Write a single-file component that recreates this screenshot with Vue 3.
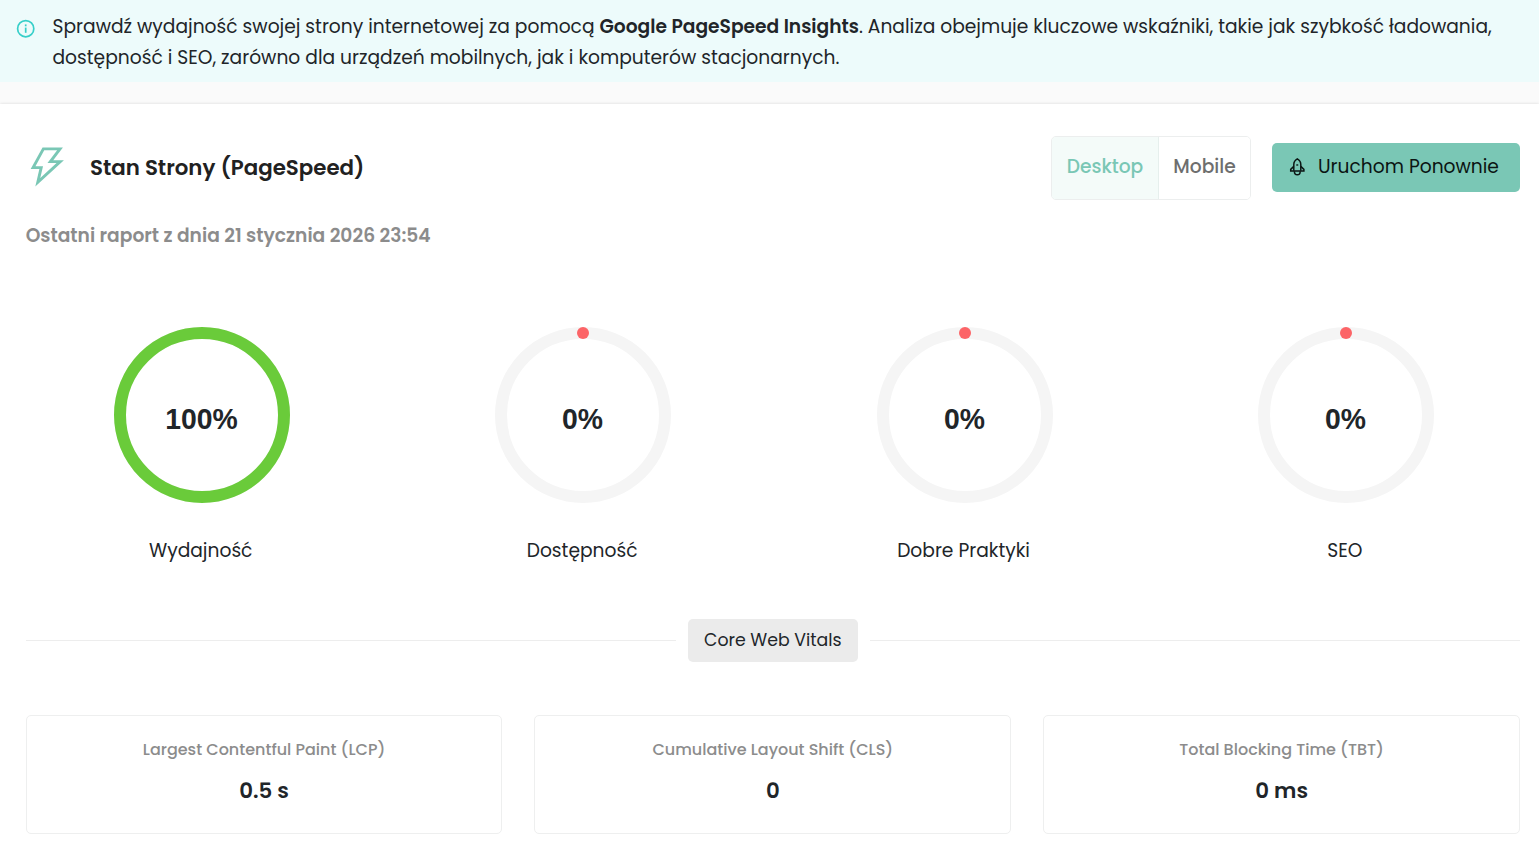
<template>
  <div class="page">
    <div class="alert">
      <svg class="info-icon" viewBox="0 0 20 20" fill="none" stroke="#36cfc9" stroke-width="1.7">
        <circle cx="9.7" cy="9.7" r="8.1" />
        <path d="M9.7 8.6v5.2" />
        <path d="M9.7 5.4v1.9" />
      </svg>
      <p class="alert-text">Sprawdź wydajność swojej strony internetowej za pomocą <strong>Google PageSpeed Insights</strong>. Analiza obejmuje kluczowe wskaźniki, takie jak szybkość ładowania, dostępność i SEO, zarówno dla urządzeń mobilnych, jak i komputerów stacjonarnych.</p>
    </div>

    <main class="report">
      <header class="report-header">
        <svg class="bolt" viewBox="0 0 34 40" fill="none" stroke="#7ac7b5" stroke-width="2.9">
          <path d="M13.4 1.9H30L20.4 14.6H30.2L7.8 35.2L11.2 20.6H3.1Z" />
        </svg>
        <h2>Stan Strony (PageSpeed)</h2>
        <div class="device-switch">
          <button :class="{ active: device === 'desktop' }" @click="device = 'desktop'">Desktop</button>
          <button :class="{ active: device === 'mobile' }" @click="device = 'mobile'">Mobile</button>
        </div>
        <button class="btn-run">
          <svg class="rocket" viewBox="0 0 18 20" fill="none" stroke="#0b1513" stroke-width="1.5">
            <path d="M5.8 14.8V8.4C5.8 5.8 7.5 3.8 9.3 2.8C11.1 3.8 12.8 5.8 12.8 8.4V14.8" />
            <path d="M5.8 10.4L2.7 13.4V14.9H15.9V13.4L12.8 10.4" />
            <path d="M6.4 15.2C6.4 17.4 7.6 18.8 9.3 18.8S12.2 17.4 12.2 15.2" />
            <circle cx="9.3" cy="9" r=".3" />
          </svg>
          <span>Uruchom Ponownie</span>
        </button>
      </header>

      <p class="last-report">Ostatni raport z dnia 21 stycznia 2026 23:54</p>

      <section class="scores">
        <div v-for="score in scores" :key="score.label" class="score">
          <svg class="ring" viewBox="0 0 176 176">
            <circle cx="88" cy="88" r="82" fill="none" stroke="#f5f5f5" stroke-width="12" />
            <circle v-if="score.value === 100" cx="88" cy="88" r="82" fill="none" stroke="#6acb3a" stroke-width="12" />
            <circle v-else cx="88" cy="6" r="6" fill="#fc6467" />
            <text transform="translate(87.5 101.8) scale(0.945 1)" text-anchor="middle">{{ score.value }}%</text>
          </svg>
          <span class="score-label">{{ score.label }}</span>
        </div>
      </section>

      <div class="divider"><span class="divider-badge">Core Web Vitals</span></div>

      <section class="vitals">
        <div v-for="vital in vitals" :key="vital.label" class="vital">
          <span class="vital-label">{{ vital.label }}</span>
          <strong class="vital-value">{{ vital.value }}</strong>
        </div>
      </section>
    </main>
  </div>
</template>

<script setup>
import { ref } from 'vue';

const device = ref('desktop');

const scores = [
  { label: 'Wydajność', value: 100 },
  { label: 'Dostępność', value: 0 },
  { label: 'Dobre Praktyki', value: 0 },
  { label: 'SEO', value: 0 }
];

const vitals = [
  { label: 'Largest Contentful Paint (LCP)', value: '0.5 s' },
  { label: 'Cumulative Layout Shift (CLS)', value: '0' },
  { label: 'Total Blocking Time (TBT)', value: '0 ms' }
];
</script>

<style>
body { margin: 0; background: #fafafa; overflow: hidden; }
</style>

<style scoped>
.page { height: 849px; overflow: hidden; display: flex; flex-direction: column; color: #212529; font-family: Poppins, Inter, sans-serif; font-size: 18.67px; }
.page * { box-sizing: border-box; }
p, h2 { margin: 0; }
button { font: inherit; cursor: pointer; }
.alert { display: flex; height: 82px; padding: 11px 16px 0 16px; background: #edfbfb; flex: none; }
.info-icon { width: 20px; height: 20px; margin: 8px 16.5px 0 0; flex: none; }
.alert-text { line-height: 31px; }
.alert-text strong { font-weight: 600; }
.report { flex: 1; margin-top: 22px; padding: 32px 19px 0 25.67px; background: #fff; box-shadow: 0 0 3px rgba(0, 0, 0, 0.14); }
.report-header { display: flex; align-items: center; height: 64px; }
.bolt { width: 34px; height: 40px; margin: 0 26px 2px 4.33px; }
h2 { padding-bottom: 1px; font-size: 21.33px; font-weight: 600; color: #212121; white-space: nowrap; }
.device-switch { display: flex; height: 64px; margin-left: auto; margin-right: 21px; border: 1px solid #eceeee; border-radius: 5px; overflow: hidden; }
.device-switch button { width: 91px; padding: 0 0 3px; border: 0; background: #fff; color: #6e6e6e; font-weight: 500; }
.device-switch button:first-child { width: 107px; border-right: 1px solid #e6efed; }
.device-switch button.active { background: #f4fbf9; color: #7ac7b5; }
.btn-run { display: flex; align-items: center; width: 248px; height: 49px; margin-bottom: 2px; padding: 0 0 2px 16px; border: 0; border-radius: 5px; background: #7ac7b5; color: #0b1513; white-space: nowrap; }
.rocket { width: 18px; height: 20px; margin-right: 12px; }
.last-report { margin-top: 20px; line-height: 31px; font-weight: 600; color: #8c8c8c; }
.scores { display: grid; grid-template-columns: repeat(4, 1fr); margin: 76px -16.67px 0 -14.67px; }
.score { display: flex; flex-direction: column; align-items: center; }
.ring { width: 176px; height: 176px; display: block; }
.ring text { font-family: "Liberation Sans", Arial, sans-serif; font-size: 30px; font-weight: 700; fill: #212529; }
.score-label { margin: 32px 2px 0 0; line-height: 31px; }
.divider { display: flex; align-items: center; gap: 12px; margin-top: 53px; height: 43px; }
.divider::before, .divider::after { content: ''; flex: 1; height: 1px; background: #ededed; }
.divider-badge { width: 170px; height: 43px; line-height: 42px; text-align: center; border-radius: 5px; background: #ebebeb; font-size: 17.33px; }
.vitals { display: grid; grid-template-columns: repeat(3, 1fr); gap: 32px; margin-top: 53px; }
.vital { display: flex; flex-direction: column; align-items: center; height: 119px; padding-top: 21px; border: 1px solid #eeefef; border-radius: 5px; }
.vital-label { font-size: 16px; line-height: 26px; font-weight: 500; color: #8c8c8c; }
.vital-value { margin-top: 10px; font-size: 21.33px; line-height: 36px; font-weight: 600; }
</style>
